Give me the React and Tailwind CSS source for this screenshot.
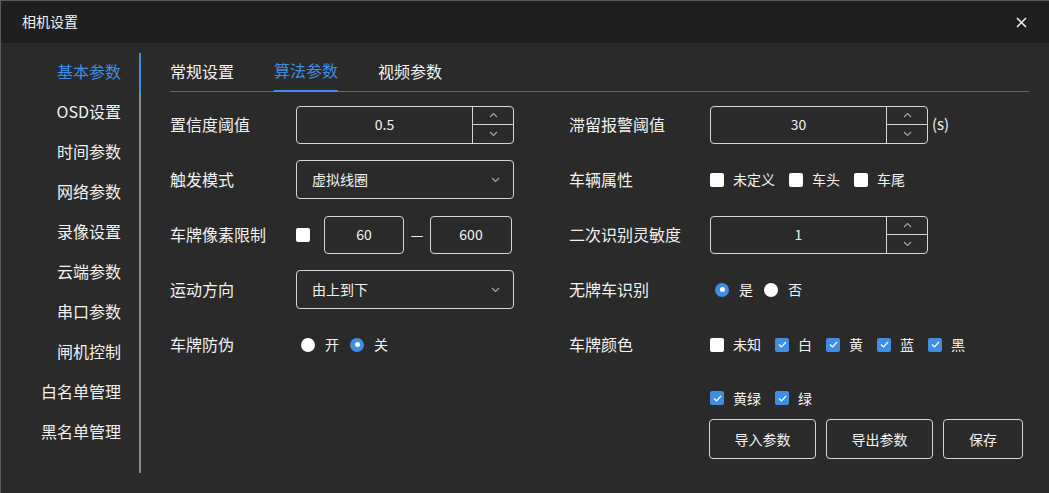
import React from 'react';

const FONT = { fontFamily: '"Noto Sans CJK SC", "Noto Sans", sans-serif' };

const navItems = ['基本参数', 'OSD设置', '时间参数', '网络参数', '录像设置', '云端参数', '串口参数', '闸机控制', '白名单管理', '黑名单管理'];
const tabs = ['常规设置', '算法参数', '视频参数'];

const Chevron = ({ up = false, className = '' }) => (
    <svg width="9" height="6" viewBox="0 0 9 6" className={className}>
        <path d={up ? 'M1 5 L4.5 1.5 L8 5' : 'M1 1 L4.5 4.5 L8 1'} fill="none" stroke="#a8a8a8" strokeWidth="1.1" />
    </svg>
);

const NumberInput = ({ value }) => (
    <div className="flex h-[38px] w-[218px] rounded-[4px] border border-[#d6d6d6]">
        <div className="flex flex-1 items-center justify-center text-[14px] text-[#f2f2f2]">{value}</div>
        <div className="flex w-[41px] flex-col border-l border-[#d6d6d6]">
            <div className="flex flex-1 items-center justify-center border-b border-[#d6d6d6]"><Chevron up /></div>
            <div className="flex flex-1 items-center justify-center"><Chevron /></div>
        </div>
    </div>
);

const Select = ({ value }) => (
    <div className="flex h-[39px] w-[218px] items-center justify-between rounded-[4px] border border-[#d6d6d6] pl-[15px] pr-[13px] text-[14px] text-[#f2f2f2]">
        <span>{value}</span>
        <Chevron />
    </div>
);

const Checkbox = ({ checked }) => (
    checked ? (
        <span className="flex h-[14px] w-[14px] items-center justify-center rounded-[2px] bg-[#3f8ee3]">
            <svg width="9" height="7" viewBox="0 0 9 7"><path d="M1 3.5 L3.5 6 L8 1" fill="none" stroke="#fff" strokeWidth="1.2" /></svg>
        </span>
    ) : (
        <span className="h-[14px] w-[14px] rounded-[2px] bg-white" />
    )
);

const Radio = ({ checked }) => (
    checked ? (
        <span className="flex h-[14px] w-[14px] items-center justify-center rounded-full bg-[#3f8ee3]">
            <span className="h-[5px] w-[5px] rounded-full bg-white" />
        </span>
    ) : (
        <span className="h-[14px] w-[14px] rounded-full bg-white" />
    )
);

const CheckGroup = ({ items }) => (
    <div className="flex items-center gap-[14px] text-[14px] text-[#f2f2f2]">
        {items.map(([label, checked]) => (
            <div key={label} className="flex items-center gap-[9px]">
                <Checkbox checked={checked} />
                <span>{label}</span>
            </div>
        ))}
    </div>
);

const RadioGroup = ({ items }) => (
    <div className="ml-[5px] flex items-center gap-[11px] text-[14px] text-[#f2f2f2]">
        {items.map(([label, checked]) => (
            <div key={label} className="flex items-center gap-[10px]">
                <Radio checked={checked} />
                <span>{label}</span>
            </div>
        ))}
    </div>
);

const Row = ({ label, labelWidth, children }) => (
    <div className="flex h-[55px] items-center">
        <div className="shrink-0 pb-[2px] text-[16px] text-[#f2f2f2]" style={{ width: labelWidth }}>{label}</div>
        {children}
    </div>
);

const Button = ({ children, width }) => (
    <div className={`flex h-[40px] items-center justify-center rounded-[4px] border border-[#d6d6d6] text-[14px] text-[#f2f2f2] ${width}`}>{children}</div>
);

export default function App() {
    return (
        <div className="h-[493px] w-[1049px] overflow-hidden border-l border-t border-[#5a5a5a] bg-[#2a2a2a]" style={FONT}>
            {/* Header */}
            <div className="flex h-[42px] items-center justify-between bg-[#1f1f1f] pl-[21px] pr-[22px]">
                <span className="pb-[2px] text-[14px] text-[#f2f2f2]">相机设置</span>
                <svg width="11" height="11" viewBox="0 0 11 11">
                    <path d="M1 1 L10 10 M10 1 L1 10" stroke="#f2f2f2" strokeWidth="1.5" />
                </svg>
            </div>

            <div className="flex pt-[10px]">
                {/* Side nav */}
                <div className="flex h-[420px] w-[140px] flex-col border-r-2 border-[#8a8a8a]">
                    {navItems.map((item, i) => (
                        <div
                            key={item}
                            className={`relative flex h-[40px] items-center justify-end pb-[4px] pr-[18px] text-[16px] ${i === 0 ? 'text-[#3f8ee3]' : 'text-[#f2f2f2]'}`}
                        >
                            {item}
                            {i === 0 && <span className="absolute -right-[2px] top-0 h-[40px] w-[2px] bg-[#3f8ee3]" />}
                        </div>
                    ))}
                </div>

                {/* Content */}
                <div className="ml-[29px] w-[859px]">
                    <div className="flex h-[39px] items-start gap-10 border-b border-[#6a6a6a]">
                        {tabs.map((t, i) => (
                            <div
                                key={t}
                                className={`flex h-[39px] items-center pb-[3px] text-[16px] ${i === 1 ? '-mb-px border-b-2 border-[#3f8ee3] text-[#3f8ee3]' : 'text-[#f2f2f2]'}`}
                            >
                                {t}
                            </div>
                        ))}
                    </div>

                    <div className="flex pt-[5px]">
                        {/* Left column */}
                        <div className="w-[399px]">
                            <Row label="置信度阈值" labelWidth={126}><NumberInput value="0.5" /></Row>
                            <Row label="触发模式" labelWidth={126}><Select value="虚拟线圈" /></Row>
                            <Row label="车牌像素限制" labelWidth={126}>
                                <Checkbox checked={false} />
                                <div className="ml-[14px] flex h-[38px] w-[80px] items-center justify-center rounded-[4px] border border-[#d6d6d6] text-[14px] text-[#f2f2f2]">60</div>
                                <span className="mx-[6px] w-[14px] text-center text-[14px] text-[#f2f2f2]">—</span>
                                <div className="flex h-[38px] w-[82px] items-center justify-center rounded-[4px] border border-[#d6d6d6] text-[14px] text-[#f2f2f2]">600</div>
                            </Row>
                            <Row label="运动方向" labelWidth={126}><Select value="由上到下" /></Row>
                            <Row label="车牌防伪" labelWidth={126}><RadioGroup items={[['开', false], ['关', true]]} /></Row>
                        </div>

                        {/* Right column */}
                        <div className="flex-1">
                            <Row label="滞留报警阈值" labelWidth={141}>
                                <NumberInput value="30" />
                                <span className="ml-[4px] text-[15px] text-[#f2f2f2]">(s)</span>
                            </Row>
                            <Row label="车辆属性" labelWidth={141}>
                                <CheckGroup items={[['未定义', false], ['车头', false], ['车尾', false]]} />
                            </Row>
                            <Row label="二次识别灵敏度" labelWidth={141}><NumberInput value="1" /></Row>
                            <Row label="无牌车识别" labelWidth={141}><RadioGroup items={[['是', true], ['否', false]]} /></Row>
                            <Row label="车牌颜色" labelWidth={141}>
                                <CheckGroup items={[['未知', false], ['白', true], ['黄', true], ['蓝', true], ['黑', true]]} />
                            </Row>
                            <div className="ml-[141px] mt-[17px] flex h-[18px] items-center">
                                <CheckGroup items={[['黄绿', true], ['绿', true]]} />
                            </div>
                            <div className="ml-[140px] mt-[12px] flex gap-[10px]">
                                <Button width="w-[107px]">导入参数</Button>
                                <Button width="w-[107px]">导出参数</Button>
                                <Button width="w-[80px]">保存</Button>
                            </div>
                        </div>
                    </div>
                </div>
            </div>
        </div>
    );
}
